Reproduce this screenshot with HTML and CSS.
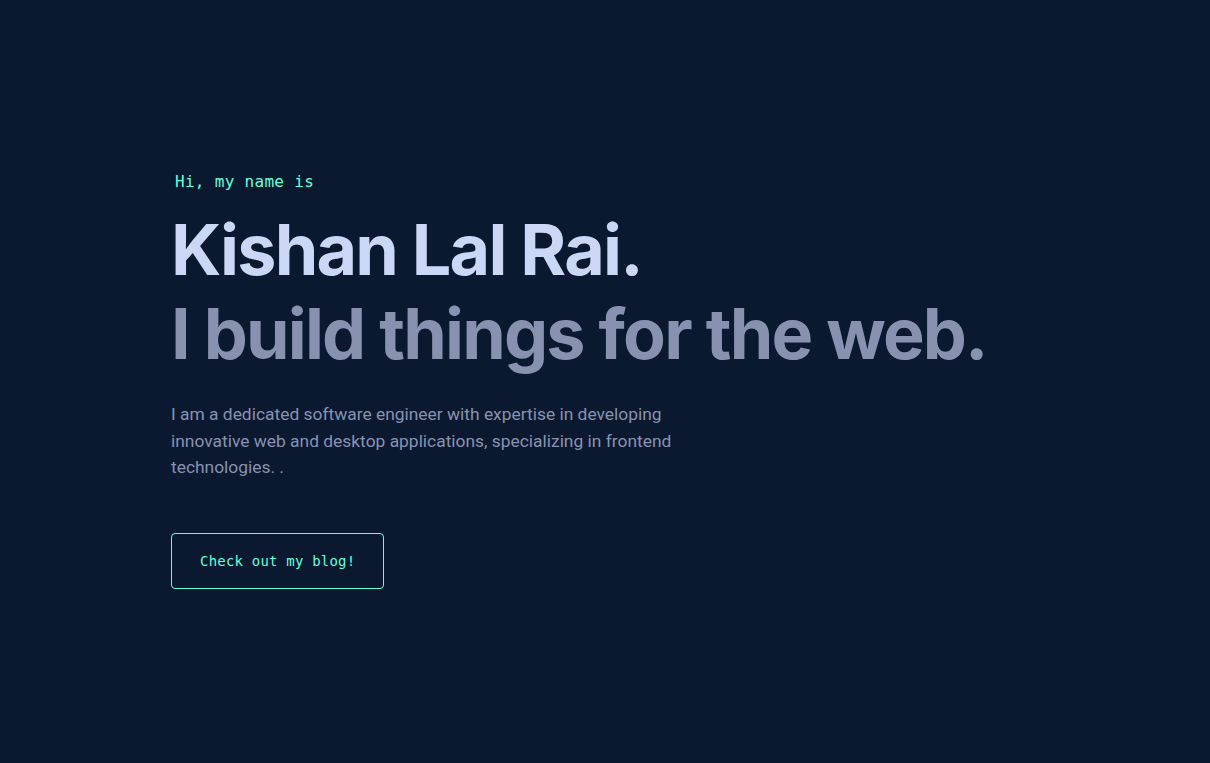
FILE: index.html
```html
<!DOCTYPE html>
<html lang="en">
<head>
<meta charset="utf-8">
<title>Kishan Lal Rai</title>
<link rel="stylesheet" href="styles.css">
</head>
<body>
<main class="main">
  <section class="hero">
    <h1 class="intro">Hi, my name is</h1>
    <h2 class="big-heading name">Kishan Lal Rai.</h2>
    <h3 class="big-heading tagline">I build things for the web.</h3>
    <p class="summary">I am a dedicated software engineer with expertise in developing innovative web and desktop applications, specializing in frontend technologies. .</p>
    <a class="blog-button" href="#">Check out my blog!</a>
  </section>
</main>
</body>
</html>
```

FILE: styles.css
```css
* { box-sizing: border-box; }
html, body {
  margin: 0;
  padding: 0;
  background: #0a192f;
}
body {
  font-family: Roboto, "Liberation Sans", sans-serif;
  color: #8892b0;
}
.main {
  padding: 0 171px;
}
.hero {
  min-height: 100vh;
  display: flex;
  flex-direction: column;
  justify-content: center;
  align-items: flex-start;
  max-width: 1000px;
}
.intro {
  margin: 0 0 20px 4px;
  color: #64ffda;
  font-family: "DejaVu Sans Mono", "Liberation Mono", monospace;
  font-size: 16px;
  font-weight: 400;
  line-height: 1;
  letter-spacing: 0.3px;
}
.big-heading {
  margin: 0;
  font-family: Inter, "Noto Sans", sans-serif;
  font-size: 70px;
  font-weight: 700;
  letter-spacing: -1.8px;
  line-height: 80px;
}
.name {
  color: #ccd6f6;
}
.tagline {
  margin-top: 4px;
  color: #8892b0;
}
.summary {
  margin: 27px 0 0;
  max-width: 540px;
  font-size: 17.4px;
  line-height: 26.5px;
}
.blog-button {
  margin-top: 52px;
  padding: 20px 28px;
  border: 1px solid #64ffda;
  border-radius: 4px;
  color: #64ffda;
  font-family: "DejaVu Sans Mono", "Liberation Mono", monospace;
  font-size: 14px;
  line-height: 1;
  letter-spacing: 0.2px;
  text-decoration: none;
}
```
